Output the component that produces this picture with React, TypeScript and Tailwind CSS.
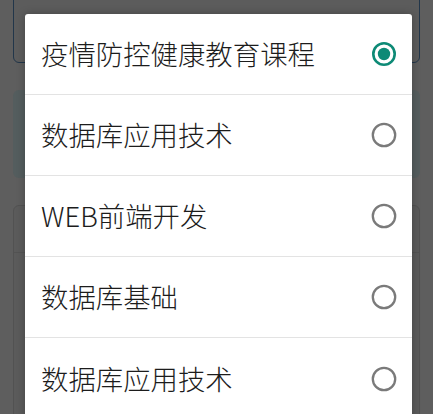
import React from "react";

const items = [
  { label: "疫情防控健康教育课程", selected: true },
  { label: "数据库应用技术", selected: false },
  { label: "WEB前端开发", selected: false },
  { label: "数据库基础", selected: false },
  { label: "数据库应用技术", selected: false },
];

function Radio({ selected }: { selected: boolean }) {
  if (selected) {
    return (
      <svg width="26" height="26" viewBox="0 0 26 26">
        <circle cx="13" cy="13" r="10.7" fill="none" stroke="#0d8a76" strokeWidth="2.6" />
        <circle cx="13" cy="13" r="6.2" fill="#0d8a76" />
      </svg>
    );
  }
  return (
    <svg width="26" height="26" viewBox="0 0 26 26">
      <circle cx="13" cy="13" r="11.2" fill="none" stroke="#7a7a7a" strokeWidth="2.3" />
    </svg>
  );
}

export default function App() {
  return (
    <div
      className="relative w-[433px] h-[414px] overflow-hidden bg-[#5e5e5e]"
      style={{ fontFamily: '"Noto Sans CJK SC", "Noto Sans", sans-serif' }}
    >
      {/* dimmed page behind */}
      <div className="flex flex-col px-[13px] gap-[27px] -mt-[10px]">
        <div className="h-[73px] rounded-[6px] border-[1.5px] border-[#22364a] bg-[#5c5c5c]" />
        <div className="h-[88px] rounded-[6px] bg-[#545d5e]" />
        <div className="h-[260px] rounded-[6px] border border-[#525252] bg-[#5b5b5b] flex flex-col">
          <div className="h-[47px] border-b border-[#535353]" />
        </div>
      </div>

      {/* dialog */}
      <div className="absolute left-[25px] top-[14px] w-[387px] bg-white rounded-t-[3px] shadow-[0_0_8px_rgba(0,0,0,0.25)]">
        {items.map((it, i) => (
          <div
            key={i}
            className={
              "h-[81px] flex items-center justify-between pl-[16px] pr-[15px] " +
              (i < items.length - 1 ? "border-b border-[#e3e3e3]" : "")
            }
          >
            <span className="text-[27.4px] leading-none font-light text-[#1c1c1c]">{it.label}</span>
            <Radio selected={it.selected} />
          </div>
        ))}
      </div>
    </div>
  );
}
